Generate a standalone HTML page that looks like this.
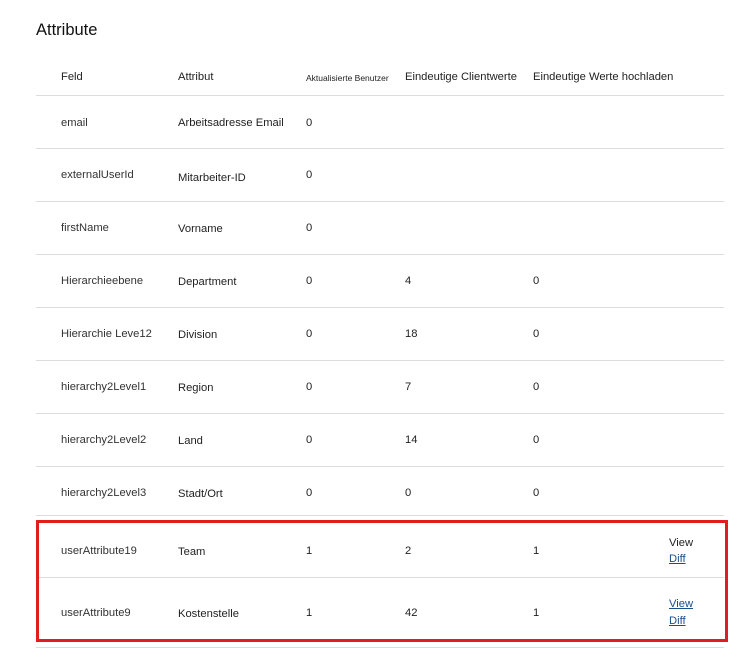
<!DOCTYPE html>
<html><head><meta charset="utf-8"><style>
body{margin:0;width:756px;height:664px;background:#fff;font-family:"Liberation Sans",Arial,sans-serif;color:#222;position:relative;overflow:hidden}
.t{position:absolute;font-size:11.2px;white-space:nowrap;line-height:14px}
.g{color:#333}
.h{position:absolute;left:36px;width:688px;height:1px;background:#dcdcdc}
a{color:#1a4f8a;text-decoration:underline}
</style></head><body>
<div class="t" style="left:36px;top:21px;font-size:16.5px;line-height:18px;color:#111">Attribute</div>
<div class="t" style="left:61px;top:70px">Feld</div>
<div class="t" style="left:178px;top:70px">Attribut</div>
<div class="t" style="left:306px;top:71px;font-size:8.5px">Aktualisierte Benutzer</div>
<div class="t" style="left:405px;top:70px">Eindeutige Clientwerte</div>
<div class="t" style="left:533px;top:70px">Eindeutige Werte hochladen</div>
<div class="h" style="top:95px"></div>

<div class="t g" style="left:61px;top:116px">email</div><div class="t" style="left:178px;top:116px">Arbeitsadresse Email</div><div class="t" style="left:306px;top:116px">0</div>
<div class="h" style="top:148px"></div>
<div class="t g" style="left:61px;top:168px">externalUserId</div><div class="t" style="left:178px;top:171px">Mitarbeiter-ID</div><div class="t" style="left:306px;top:168px">0</div>
<div class="h" style="top:201px"></div>
<div class="t g" style="left:61px;top:221px">firstName</div><div class="t" style="left:178px;top:222px">Vorname</div><div class="t" style="left:306px;top:221px">0</div>
<div class="h" style="top:254px"></div>
<div class="t g" style="left:61px;top:274px">Hierarchieebene</div><div class="t" style="left:178px;top:275px">Department</div><div class="t" style="left:306px;top:274px">0</div><div class="t" style="left:405px;top:274px">4</div><div class="t" style="left:533px;top:274px">0</div>
<div class="h" style="top:307px"></div>
<div class="t g" style="left:61px;top:327px">Hierarchie Leve12</div><div class="t" style="left:178px;top:328px">Division</div><div class="t" style="left:306px;top:327px">0</div><div class="t" style="left:405px;top:327px">18</div><div class="t" style="left:533px;top:327px">0</div>
<div class="h" style="top:360px"></div>
<div class="t g" style="left:61px;top:380px">hierarchy2Level1</div><div class="t" style="left:178px;top:381px">Region</div><div class="t" style="left:306px;top:380px">0</div><div class="t" style="left:405px;top:380px">7</div><div class="t" style="left:533px;top:380px">0</div>
<div class="h" style="top:413px"></div>
<div class="t g" style="left:61px;top:433px">hierarchy2Level2</div><div class="t" style="left:178px;top:434px">Land</div><div class="t" style="left:306px;top:433px">0</div><div class="t" style="left:405px;top:433px">14</div><div class="t" style="left:533px;top:433px">0</div>
<div class="h" style="top:466px"></div>
<div class="t g" style="left:61px;top:486px">hierarchy2Level3</div><div class="t" style="left:178px;top:487px">Stadt/Ort</div><div class="t" style="left:306px;top:486px">0</div><div class="t" style="left:405px;top:486px">0</div><div class="t" style="left:533px;top:486px">0</div>
<div class="h" style="top:515px"></div>

<div class="t g" style="left:61px;top:544px">userAttribute19</div><div class="t" style="left:178px;top:545px">Team</div><div class="t" style="left:306px;top:544px">1</div><div class="t" style="left:405px;top:544px">2</div><div class="t" style="left:533px;top:544px">1</div>
<div class="t" style="left:669px;top:536px">View</div><div class="t" style="left:669px;top:552px"><a>Diff</a></div>
<div class="h" style="top:577px"></div>
<div class="t g" style="left:61px;top:606px">userAttribute9</div><div class="t" style="left:178px;top:607px">Kostenstelle</div><div class="t" style="left:306px;top:606px">1</div><div class="t" style="left:405px;top:606px">42</div><div class="t" style="left:533px;top:606px">1</div>
<div class="t" style="left:669px;top:597px"><a>View</a></div><div class="t" style="left:669px;top:614px"><a>Diff</a></div>
<div class="h" style="top:647px"></div>
<div style="position:absolute;left:36px;top:520px;width:686px;height:116px;border:3px solid #e01e1e"></div>
</body></html>
